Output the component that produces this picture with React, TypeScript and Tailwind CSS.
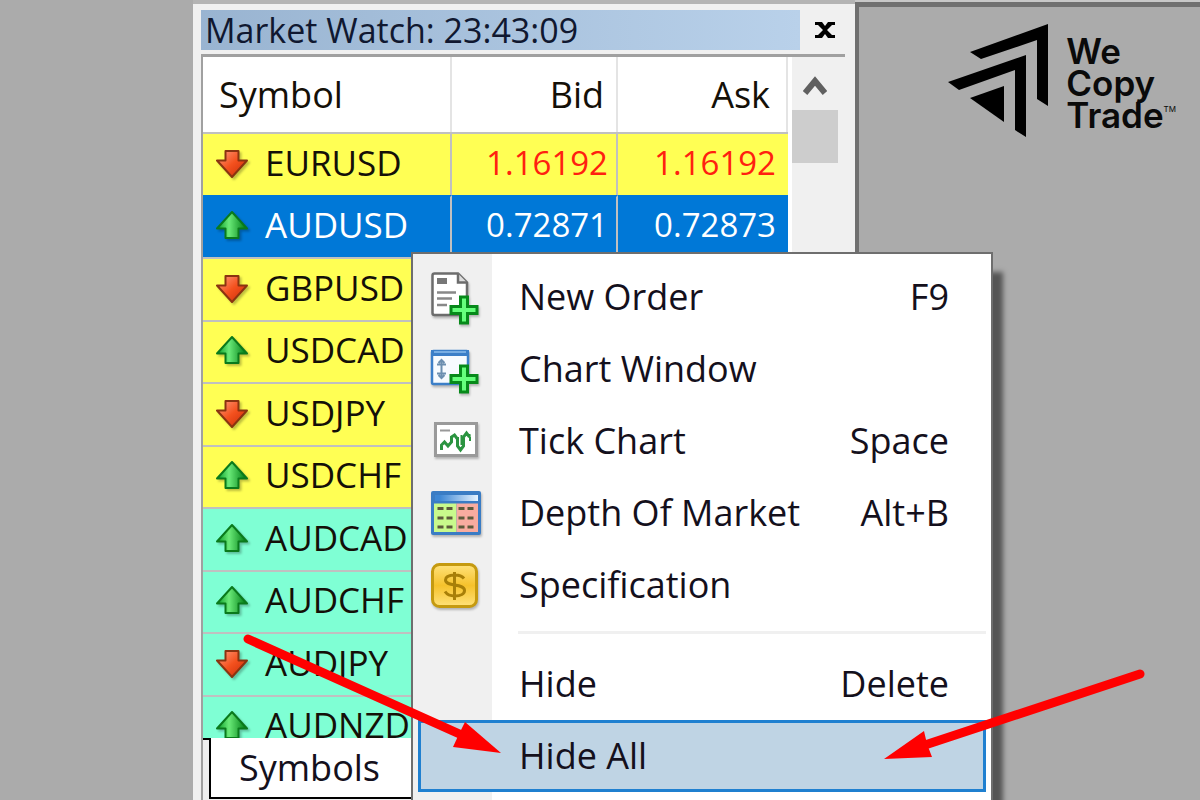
import React from 'react';

type Direction = 'up' | 'down';

interface SymbolRow {
  name: string;
  direction: Direction;
  rowClass: string;
  textClass: string;
  bid: string;
  ask: string;
}

interface MenuEntry {
  label: string;
  shortcut?: string;
  icon?: React.ReactNode;
  active?: boolean;
}

const YELLOW = 'bg-[#ffff54] border-[#c0c0c0]';
const GREEN = 'bg-[#7fffd4] border-[#c0c0c0]';
const SELECTED = 'bg-[#0078d7] border-[#0078d7]';

const rows: SymbolRow[] = [
  { name: 'EURUSD', direction: 'down', rowClass: YELLOW, textClass: 'text-[#ff2010]', bid: '1.16192', ask: '1.16192' },
  { name: 'AUDUSD', direction: 'up', rowClass: SELECTED, textClass: 'text-white', bid: '0.72871', ask: '0.72873' },
  { name: 'GBPUSD', direction: 'down', rowClass: YELLOW, textClass: '', bid: '', ask: '' },
  { name: 'USDCAD', direction: 'up', rowClass: YELLOW, textClass: '', bid: '', ask: '' },
  { name: 'USDJPY', direction: 'down', rowClass: YELLOW, textClass: '', bid: '', ask: '' },
  { name: 'USDCHF', direction: 'up', rowClass: YELLOW, textClass: '', bid: '', ask: '' },
  { name: 'AUDCAD', direction: 'up', rowClass: GREEN, textClass: '', bid: '', ask: '' },
  { name: 'AUDCHF', direction: 'up', rowClass: GREEN, textClass: '', bid: '', ask: '' },
  { name: 'AUDJPY', direction: 'down', rowClass: GREEN, textClass: '', bid: '', ask: '' },
  { name: 'AUDNZD', direction: 'up', rowClass: GREEN, textClass: '', bid: '', ask: '' },
];

const DirectionIcon: React.FC<{ direction: Direction }> = ({ direction }) => (
  <svg width="34" height="32" viewBox="0 0 34 32" className="shrink-0 drop-shadow-[2px_2px_1px_rgba(0,0,0,0.25)]" aria-hidden="true">
    <defs>
      <linearGradient id="downFill" x1="0" y1="0" x2="1" y2="1">
        <stop offset="0" stopColor="#ffa080" />
        <stop offset="0.5" stopColor="#f4511e" />
        <stop offset="1" stopColor="#c62a08" />
      </linearGradient>
      <linearGradient id="upFill" x1="0" y1="0" x2="1" y2="0">
        <stop offset="0.1" stopColor="#1fae3a" />
        <stop offset="0.4" stopColor="#6aea78" />
        <stop offset="0.9" stopColor="#0c8a20" />
      </linearGradient>
    </defs>
    {direction === 'down' ? (
      <path d="M10.500 4h13v9.500h8.500L17 30 2 13.500h8.500z" fill="url(#downFill)" stroke="#8a3410" strokeWidth="2" strokeLinejoin="round" />
    ) : (
      <path d="M17 3 32 19.500h-8.500v9.500H10.500V19.500H2z" fill="url(#upFill)" stroke="#0a7a1c" strokeWidth="2" strokeLinejoin="round" />
    )}
  </svg>
);

const Plus: React.FC<{ y: number }> = ({ y }) => (
  <path
    d={`M33.500 ${y + 2}h7v9.500h9.500v7h-9.500v9.500h-7v-9.500h-9.500v-7h9.500z`}
    fill="#66ff7c"
    stroke="#07891a"
    strokeWidth="3"
  />
);

const iconClass = 'shrink-0 drop-shadow-[1px_2px_1px_rgba(0,0,0,0.25)]';

const NewOrderIcon = () => (
  <svg width="60" height="60" viewBox="0 0 60 60" className={iconClass} aria-hidden="true">
    <path d="M7.500 6.500H31L40 15.500V48H7.500A2 2 0 0 1 5.500 46V8.500A2 2 0 0 1 7.500 6.500z" fill="#fff" stroke="#6c6c6c" strokeWidth="2.500" />
    <path d="M31 6.500V15.500H40" fill="#ddd" stroke="#6c6c6c" strokeWidth="2.500" />
    <path d="M10 11h10v6H10z" fill="#777" />
    <path d="M10 25.500h19M10 31.500h15M10 38h10" stroke="#888" strokeWidth="2.500" />
    <Plus y={28} />
  </svg>
);

const ChartWindowIcon = () => (
  <svg width="60" height="60" viewBox="0 0 60 60" className={iconClass} aria-hidden="true">
    <rect x="5" y="12" width="36" height="33" rx="1.500" fill="#f7fbff" stroke="#3c7fc8" strokeWidth="2.500" />
    <path d="M4 11h38v6H4z" fill="#3c7fc8" />
    <path d="M7 13h32" stroke="#8bbdec" strokeWidth="1.500" />
    <path d="M14.500 21v18M10 25.500h9M10 34.500h9M11.500 24l3-3 3 3M11.500 36l3 3 3-3" fill="none" stroke="#6c8fb0" strokeWidth="2" />
    <Plus y={25} />
  </svg>
);

const TickChartIcon = () => (
  <svg width="60" height="60" viewBox="0 0 60 60" className={iconClass} aria-hidden="true">
    <rect x="8.500" y="12.500" width="41" height="32" fill="#fff" stroke="#9a9a9a" strokeWidth="3" />
    <path d="M13 19.500h10" stroke="#999" strokeWidth="2" />
    <path
      d="M14.500 39v-5l3-3 3.500 4 3.500-4v-5l3-2 3 4v7l3 4 3-4v-9l3-4 3 4"
      fill="none"
      stroke="#2b9440"
      strokeWidth="3"
    />
    <path d="M42.500 26v-3M43 26v4M31 26v10M34.500 24v10" stroke="#2b9440" strokeWidth="2" />
  </svg>
);

const DepthIcon = () => (
  <svg width="60" height="60" viewBox="0 0 60 60" className={iconClass} aria-hidden="true">
    <defs>
      <linearGradient id="depthBar" x1="0" y1="0" x2="1" y2="0">
        <stop offset="0.1" stopColor="#3c86d4" />
        <stop offset="1" stopColor="#e8f4ff" />
      </linearGradient>
    </defs>
    <rect x="4" y="8" width="50" height="44" rx="2" fill="#3a7cc4" />
    <path d="M8 12h43v6H8z" fill="url(#depthBar)" />
    <path d="M7 20.500h22.500V49H7z" fill="#c8f98c" />
    <path d="M29.500 20.500H51V49H29.500z" fill="#f8aca0" />
    <path
      d="M10.500 25.500h6m3 0h6m6 0h6m3 0h6M10.500 35h6m3 0h6m6 0h6m3 0h6M10.500 44h6m3 0h6m6 0h6m3 0h6"
      stroke="#5c5a3c"
      strokeWidth="3"
    />
  </svg>
);

const SpecificationIcon = () => (
  <svg width="60" height="60" viewBox="0 0 60 60" className={iconClass} aria-hidden="true">
    <defs>
      <linearGradient id="coinFill" x1="0" y1="0" x2="0" y2="1">
        <stop offset="0" stopColor="#ffe27a" />
        <stop offset="0.5" stopColor="#f6c22c" />
        <stop offset="1" stopColor="#ffe27a" />
      </linearGradient>
    </defs>
    <rect x="5.500" y="9.500" width="44" height="42" rx="7" fill="url(#coinFill)" stroke="#c59a10" strokeWidth="3" />
    <path
      d="M37 23.500c-2-2.500-5-3.500-9-3.500-6 0-9.500 2-9.500 5 0 7 19 3 19 10.500 0 3.500-4 5.500-9.500 5.500-4.500 0-8-1.500-10-4.500M27.500 17v28"
      fill="none"
      stroke="#a87f08"
      strokeWidth="3"
    />
  </svg>
);

const mainEntries: MenuEntry[] = [
  { label: 'New Order', shortcut: 'F9', icon: <NewOrderIcon /> },
  { label: 'Chart Window', icon: <ChartWindowIcon /> },
  { label: 'Tick Chart', shortcut: 'Space', icon: <TickChartIcon /> },
  { label: 'Depth Of Market', shortcut: 'Alt+B', icon: <DepthIcon /> },
  { label: 'Specification', icon: <SpecificationIcon /> },
];

const hideEntries: MenuEntry[] = [
  { label: 'Hide', shortcut: 'Delete' },
  { label: 'Hide All', active: true },
];

const MenuItem: React.FC<{ entry: MenuEntry }> = ({ entry }) => (
  <button
    type="button"
    role="menuitem"
    className={`flex h-18 w-full shrink-0 items-center border-[3px] pr-[34px] pl-[6px] text-left ${
      entry.active ? 'border-[#1f80d0] bg-[#bfd4e4]' : 'border-transparent'
    }`}
  >
    <span className="mr-8 w-[60px] shrink-0">{entry.icon}</span>
    <span className="flex-1 whitespace-nowrap">{entry.label}</span>
    {entry.shortcut && <span>{entry.shortcut}</span>}
  </button>
);

const ContextMenu = () => (
  <div
    role="menu"
    className="absolute top-[248px] left-[218px] flex h-[600px] w-[582px] flex-col border-2 border-[#6e6e6e] bg-white bg-linear-to-r from-[#f0f0f0] from-[79px] to-white to-[79px] px-[5px] pt-[7px] text-[36px] leading-[48px] text-[#14101c] shadow-[10px_20px_5px_rgba(0,0,0,0.5)]"
  >
    {mainEntries.map(entry => (
      <MenuItem key={entry.label} entry={entry} />
    ))}
    <hr className="mt-[10px] mb-[14px] ml-[100px] border-t-[3px] border-[#f0f0f0]" />
    {hideEntries.map(entry => (
      <MenuItem key={entry.label} entry={entry} />
    ))}
  </div>
);

const SymbolTable = () => (
  <table className="w-full table-fixed border-separate border-spacing-0 bg-white text-[#141008]">
    <colgroup>
      <col className="w-[249px]" />
      <col className="w-[166px]" />
      <col />
    </colgroup>
    <thead>
      <tr className="h-[75px] text-[36px] leading-[48px]">
        <th className="border-r-2 border-[#e4e4e4] pl-4 text-left font-normal">Symbol</th>
        <th className="border-r-2 border-[#e4e4e4] pr-3 text-right font-normal">Bid</th>
        <th className="border-r-2 border-[#e4e4e4] pr-4 text-right font-normal">Ask</th>
      </tr>
    </thead>
    <tbody>
      {rows.map(row => (
        <tr key={row.name} className="text-[35px] leading-[48px] odd:h-[63px] even:h-[62px]">
          <td className={`border-t-2 border-r-2 p-0 pb-1 pl-3 ${row.rowClass} border-r-[#c0c0c0]`}>
            <span className={`flex items-center gap-4 ${row.rowClass === SELECTED ? 'text-white' : ''}`}>
              <DirectionIcon direction={row.direction} />
              {row.name}
            </span>
          </td>
          <td className={`border-t-2 border-r-2 p-0 pr-2 pb-1 text-right text-[33px] ${row.rowClass} border-r-[#c0c0c0] ${row.textClass}`}>
            {row.bid}
          </td>
          <td className={`border-t-2 p-0 pr-3 pb-1 text-right text-[33px] ${row.rowClass} ${row.textClass}`}>{row.ask}</td>
        </tr>
      ))}
    </tbody>
  </table>
);

const MarketWatch = () => (
  <section className="relative flex min-w-0 flex-[644] flex-col border-t-4 border-[#b4b4b4] bg-[#f0f0f0] pt-[6px] pr-[10px] pl-2">
    <header className="flex h-10 shrink-0 items-center">
      <h1 className="flex h-10 flex-1 items-center bg-linear-to-r from-[#99b4d1] to-[#b9d1ea] pl-1 text-[34px] leading-10 text-[#101830]">
        Market Watch: 23:43:09
      </h1>
      <button type="button" aria-label="Close" className="flex h-10 w-[45px] items-center justify-center pl-1">
        <svg width="22" height="18" viewBox="0 0 22 18" aria-hidden="true">
          <path d="M1 1h7l3 4 3-4h7v3h-3l-5 5 5 5h3v3h-7l-3-4-3 4H1v-3h3l5-5-5-5H1z" fill="#000" />
        </svg>
      </button>
    </header>
    <div className="mt-1 flex min-h-0 flex-1 border-t-[3px] border-l-2 border-[#a0a0a0]">
      <div className="flex min-w-0 flex-1 flex-col bg-white">
        <div className="h-[681px] overflow-hidden">
          <SymbolTable />
        </div>
        <div className="flex min-h-0 flex-1 flex-col border-t-2 border-black bg-[#f0f0f0] pl-1.5">
          <button
            type="button"
            className="-mt-0.5 h-[61px] w-[240px] border-b-2 border-l-2 border-black bg-white pl-7 text-left text-[36px] leading-[58px] text-[#14101c]"
          >
            Symbols
          </button>
        </div>
      </div>
      <div className="flex w-[57px] shrink-0 flex-col items-start border-l-4 border-white">
        <button type="button" aria-label="Scroll up" className="flex h-[53px] w-[46px] items-center justify-center">
          <svg width="24" height="20" viewBox="0 0 24 20" className="mt-1" aria-hidden="true">
            <path d="M2 17 12 5l10 12" fill="none" stroke="#606060" strokeWidth="6" />
          </svg>
        </button>
        <div className="h-[53px] w-[46px] bg-[#cdcdcd]" />
      </div>
    </div>
    <ContextMenu />
  </section>
);

const Logo = () => (
  <div className="flex items-start gap-4 font-[Inter,sans-serif] text-[#0a0a0a]">
    <svg width="102" height="116" viewBox="0 0 102 116" aria-hidden="true">
      <path d="M22 29 100 1V83L89 76V17L33 36z" fill="#000" />
      <path d="M0 59 78 32V114L67 107V47L11 67z" fill="#000" />
      <path d="M22 75 56 63V99z" fill="#000" />
    </svg>
    <div className="pt-3 text-[35px] leading-8 font-semibold">
      <div>We</div>
      <div>Copy</div>
      <div className="flex">
        Trade<span className="text-[8px] leading-5 font-normal">TM</span>
      </div>
    </div>
  </div>
);

const PointerArrows = () => (
  <svg width="1200" height="800" viewBox="0 0 1200 800" className="pointer-events-none absolute top-0 left-0" aria-hidden="true">
    <g fill="#ff0000" stroke="#ff0000" strokeLinecap="round">
      <path d="M248 639 464 736" strokeWidth="9" />
      <path d="M501 753 465 722 459 734 453 747z" stroke="none" />
      <path d="M1140 674 925 745" strokeWidth="9" />
      <path d="M884 759 924 731 927 744 932 757z" stroke="none" />
    </g>
  </svg>
);

const App: React.FC = () => {
  return (
    <main className="relative flex h-screen min-h-[600px] overflow-hidden bg-[#ababab] font-['Open_Sans','Noto_Sans',sans-serif]">
      <div className="flex-[193]" />
      <MarketWatch />
      <div className="flex min-w-0 flex-[345] flex-col border-t-2 border-[#c8c8c8]">
        <div className="flex flex-1 justify-end border-t-[5px] border-l-4 border-[#707070] pt-4 pr-6">
          <Logo />
        </div>
      </div>
      <PointerArrows />
    </main>
  );
};

export default App;
